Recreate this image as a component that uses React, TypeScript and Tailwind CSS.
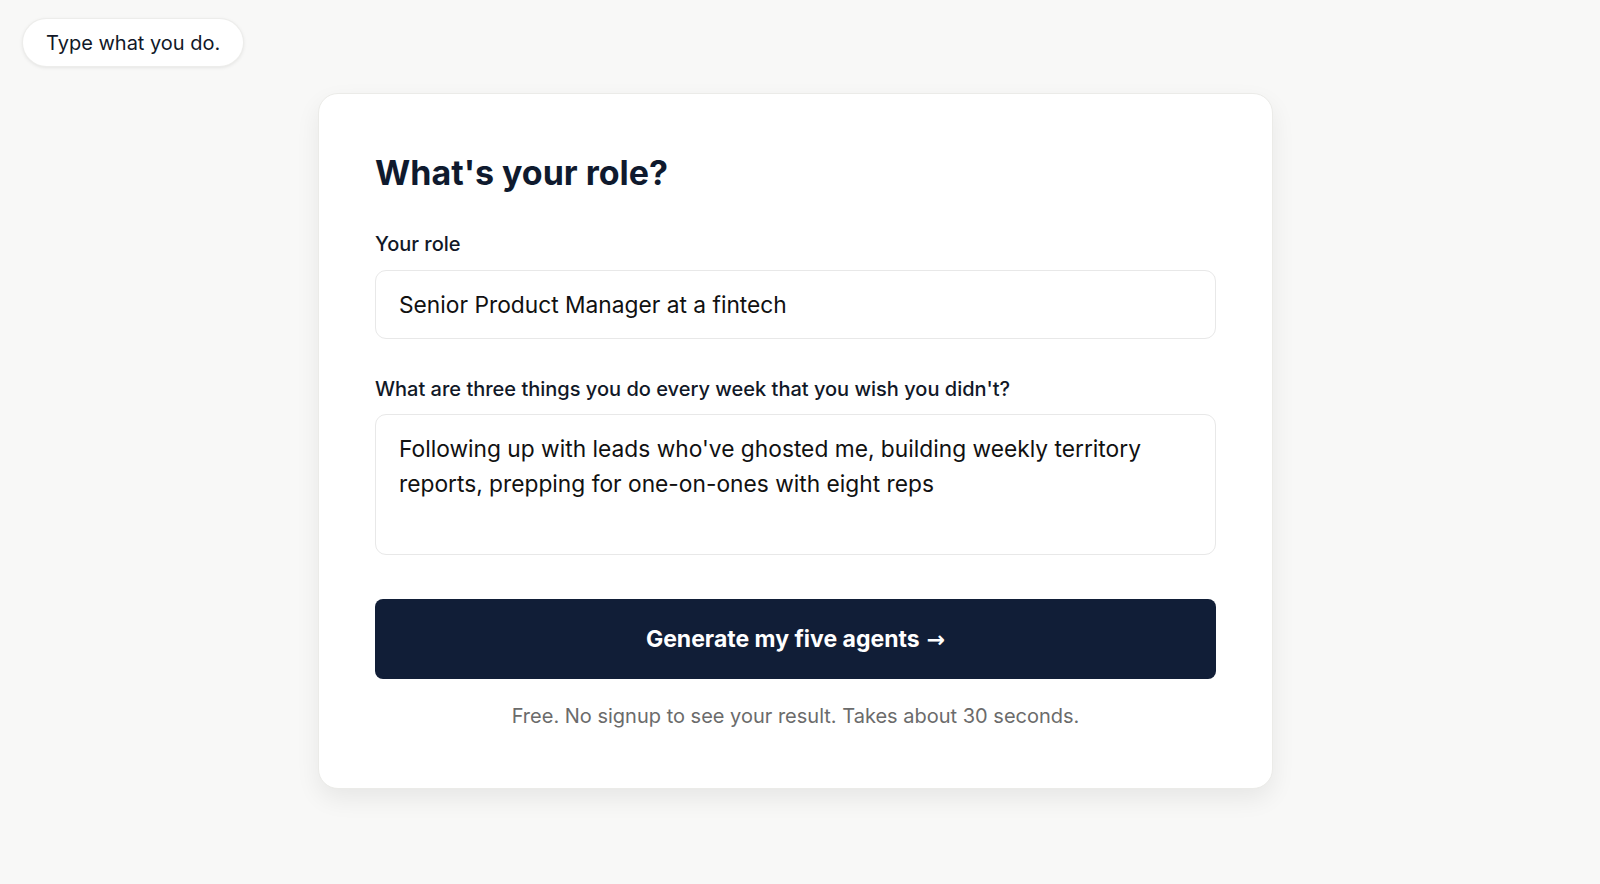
export default function App() {
  return (
    <div className="min-h-screen bg-[#f8f8f7] font-['Inter','Liberation_Sans',sans-serif] text-[#0f1a2e]">
      <div className="px-[23px] pt-[19px]">
        <div className="inline-flex h-[47px] items-center rounded-full bg-white px-[23px] text-[20px] text-[#111827] shadow-[0_1px_4px_rgba(0,0,0,0.12)] ring-1 ring-[#ededeb]">
          Type what you do.
        </div>
      </div>

      <div className="flex justify-center pr-[9px] pt-[27px]">
        <div className="w-[955px] rounded-[20px] border border-[#ebebe8] bg-white px-14 pt-14 pb-[58px] shadow-[0_10px_24px_rgba(0,0,0,0.07)]">
          <h1 className="mt-[3px] text-[34px] leading-[40px] font-bold text-[#0f1a2e]">
            What's your role?
          </h1>

          <label className="mt-[37px] mb-3 block text-[20px] leading-7 font-medium text-[#111827]">
            Your role
          </label>
          <input
            type="text"
            defaultValue="Senior Product Manager at a fintech"
            className="block h-[69px] w-full rounded-[11px] border border-[#e8e8e8] bg-white px-[23px] text-[22.75px] text-[#111111] outline-none"
          />

          <label className="mt-[36px] mb-[11px] block text-[20px] leading-7 font-medium text-[#111827]">
            What are three things you do every week that you wish you didn't?
          </label>
          <textarea
            defaultValue="Following up with leads who've ghosted me, building weekly territory reports, prepping for one-on-ones with eight reps"
            className="block h-[141px] w-full resize-none rounded-[11px] border border-[#e8e8e8] bg-white px-[23px] py-4 text-[22.75px] leading-[35px] text-[#111111] outline-none"
          />

          <button className="mt-[44px] flex h-[80px] w-full items-center justify-center rounded-lg bg-[#111e37] text-[23px] font-bold text-white">
            Generate my five agents{" "}
            <span className="ml-[7px] font-['DejaVu_Sans',sans-serif] text-[22px]">→</span>
          </button>

          <p className="mt-[23px] text-center text-[20px] leading-7 text-[#6b6b6b]">
            Free. No signup to see your result. Takes about 30 seconds.
          </p>
        </div>
      </div>
    </div>
  );
}
